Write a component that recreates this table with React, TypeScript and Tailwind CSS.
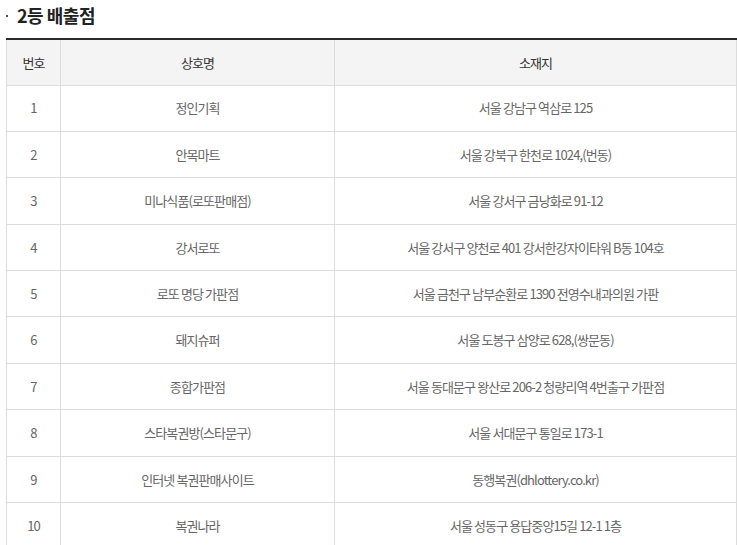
import React from "react";

const rows: [string, string, string][] = [
  ["1", "정인기획", "서울 강남구 역삼로 125"],
  ["2", "안목마트", "서울 강북구 한천로 1024,(번동)"],
  ["3", "미나식품(로또판매점)", "서울 강서구 금낭화로 91-12"],
  ["4", "강서로또", "서울 강서구 양천로 401 강서한강자이타워 B동 104호"],
  ["5", "로또 명당 가판점", "서울 금천구 남부순환로 1390 전영수내과의원 가판"],
  ["6", "돼지슈퍼", "서울 도봉구 삼양로 628,(쌍문동)"],
  ["7", "종합가판점", "서울 동대문구 왕산로 206-2 청량리역 4번출구 가판점"],
  ["8", "스타복권방(스타문구)", "서울 서대문구 통일로 173-1"],
  ["9", "인터넷 복권판매사이트", "동행복권(dhlottery.co.kr)"],
  ["10", "복권나라", "서울 성동구 용답중앙15길 12-1 1층"],
];

export default function App() {
  return (
    <div
      className="w-[737px] h-[545px] overflow-hidden bg-white pl-[6px] pt-[3px]"
      style={{ fontFamily: '"Noto Sans CJK KR", "Noto Sans", sans-serif' }}
    >
      <div className="flex items-center h-[24px]">
        <span className="w-[2px] h-[2px] bg-[#555] mr-[9px] mt-[1px]" />
        <h2 className="text-[18px] font-bold text-[#222] tracking-[-0.5px] leading-none">2등 배출점</h2>
      </div>
      <table className="mt-[11px] w-[730px] border-collapse table-fixed text-[13px] tracking-[-0.9px]">
        <colgroup>
          <col className="w-[54px]" />
          <col className="w-[274px]" />
          <col className="w-[402px]" />
        </colgroup>
        <thead>
          <tr className="h-[46px] bg-[#f4f4f4]">
            <th className="border border-[#dcdcdc] border-t-[#2b2b2b] border-t-2 font-normal text-[#333]">번호</th>
            <th className="border border-[#dcdcdc] border-t-[#2b2b2b] border-t-2 font-normal text-[#333]">상호명</th>
            <th className="border border-[#dcdcdc] border-t-[#2b2b2b] border-t-2 font-normal text-[#333]">소재지</th>
          </tr>
        </thead>
        <tbody>
          {rows.map((r) => (
            <tr key={r[0]} className="h-[46.4px]">
              <td className="border border-[#dcdcdc] text-center text-[#666]">{r[0]}</td>
              <td className="border border-[#dcdcdc] text-center text-[#666]">{r[1]}</td>
              <td className="border border-[#dcdcdc] text-center text-[#666]">{r[2]}</td>
            </tr>
          ))}
        </tbody>
      </table>
    </div>
  );
}
